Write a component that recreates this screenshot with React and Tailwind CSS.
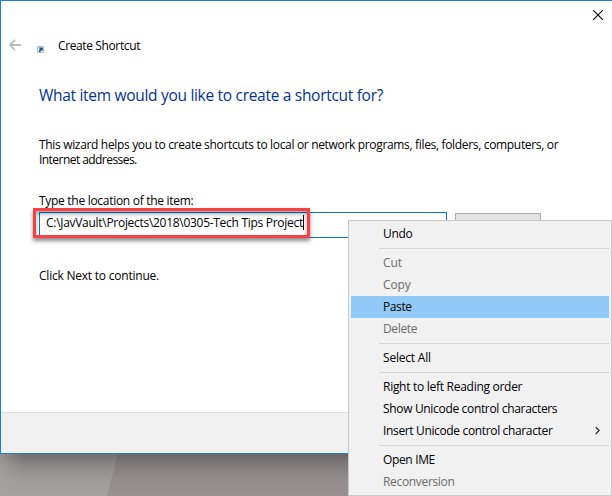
const menuGroups = [
  [{ label: "Undo", track: "tracking-[-0.3px]" }],
  [
    { label: "Cut", disabled: true, track: "tracking-[-0.1px]" },
    { label: "Copy", disabled: true, track: "tracking-[-0.1px]" },
    { label: "Paste", active: true, track: "tracking-[-0.4px]" },
    { label: "Delete", disabled: true, track: "tracking-[-0.35px]" },
  ],
  [{ label: "Select All", track: "tracking-[-0.2px]" }],
  [
    { label: "Right to left Reading order", track: "tracking-[-0.28px]" },
    { label: "Show Unicode control characters", track: "tracking-[-0.33px]" },
    { label: "Insert Unicode control character", submenu: true, track: "tracking-[-0.35px]" },
  ],
  [
    { label: "Open IME", track: "tracking-[-0.35px]" },
    { label: "Reconversion", disabled: true, track: "tracking-[-0.33px]" },
  ],
];

function MenuItem({ label, disabled, active, submenu, track }) {
  return (
    <div
      role="menuitem"
      className={`flex h-[22px] items-center justify-between pr-[9px] pb-px pl-8 ${active ? "bg-[#91c9f7]" : ""} ${disabled ? "text-[#6d6d6d]" : "text-black"}`}
    >
      <span className={track}>{label}</span>
      {submenu && (
        <svg width="5" height="9" viewBox="0 0 5 9" fill="none" stroke="#333" strokeWidth="1.3">
          <path d="M.7 1 4.1 4.5.7 8" />
        </svg>
      )}
    </div>
  );
}

function ContextMenu() {
  return (
    <div
      role="menu"
      className="absolute top-[220px] left-[348px] h-[276px] w-[264px] border border-[#c8c8c8] bg-[#f1f1f1] p-0.5"
    >
      {menuGroups.map((group, i) => (
        <div key={i}>
          {i > 0 && <div className="mt-[3px] mb-[3px] ml-7 h-px bg-[#d5d5d5]" />}
          {group.map((item) => (
            <MenuItem key={item.label} {...item} />
          ))}
        </div>
      ))}
    </div>
  );
}

function Desktop() {
  return (
    <div className="h-[42px] bg-[#989392]">
      <svg className="block" width="612" height="42">
        <defs>
          <linearGradient id="shade" x1="0" y1="0" x2="0" y2="1">
            <stop offset="0" stopColor="#3c3838" stopOpacity=".5" />
            <stop offset=".25" stopColor="#3c3838" stopOpacity=".27" />
            <stop offset=".6" stopColor="#3c3838" stopOpacity=".07" />
            <stop offset="1" stopColor="#3c3838" stopOpacity="0" />
          </linearGradient>
          <linearGradient id="corner" x1="0" y1="0" x2="1" y2="0">
            <stop offset="0" stopColor="#a6a2a1" stopOpacity=".7" />
            <stop offset="1" stopColor="#a6a2a1" stopOpacity="0" />
          </linearGradient>
        </defs>
        <path d="M0 0H118L107 42H0Z" fill="#a6a2a1" />
        <rect width="612" height="42" fill="url(#shade)" />
        <rect width="22" height="42" fill="url(#corner)" />
      </svg>
    </div>
  );
}

export default function App() {
  return (
    <div className="relative h-[496px] w-[612px] overflow-hidden bg-white font-['Open_Sans','Noto_Sans',sans-serif] text-[12px] leading-[15px] text-black">
      <div className="flex h-[454px] flex-col border-t border-b border-l border-[#1a80d5]">
        <div className="flex h-7 justify-end pt-[9px] pr-[9px]">
          <svg width="10" height="10" viewBox="0 0 10 10" stroke="#000" strokeWidth="1.1">
            <path d="M0 0 10 10M10 0 0 10" />
          </svg>
        </div>
        <div className="flex h-8 items-center pl-2">
          <svg width="12" height="12" viewBox="0 0 12 12" fill="none" stroke="#bdbdbd" strokeWidth="1.9">
            <path d="M12 6H1M6 .9.9 6 6 11.1" />
          </svg>
          <svg className="mt-[9px] ml-4" width="7" height="7" viewBox="0 0 7 7">
            <path d="M.5.5h6v6h-6z" fill="#eef1f4" stroke="#b3b9bf" />
            <path d="M2 6V4.3l.9-1L2 2V1.5h3.8V5l-1-.8L3.5 5.2V6z" fill="#1d5aa6" />
          </svg>
          <h1 className="mt-px ml-3.5 whitespace-nowrap tracking-[-0.38px]">Create Shortcut</h1>
        </div>
        <div className="flex-1 pl-[38px]">
          <h2 className="mt-[23px] whitespace-nowrap text-[15.5px] leading-[22px] tracking-[-0.3px] text-[#003399]">
            What item would you like to create a shortcut for?
          </h2>
          <p className="mt-[31px] whitespace-nowrap tracking-[-0.33px]">
            This wizard helps you to create shortcuts to local or network programs, files, folders, computers, or
            <br />
            <span className="tracking-[-0.55px]">Internet addresses.</span>
          </p>
          <label className="mt-[26px] block whitespace-nowrap tracking-[-0.29px]">Type the location of the item:</label>
          <div className="mt-1 flex gap-2">
            <div className="relative flex h-[26px] w-[408px] items-center border border-[#0078d7] pb-[5px] pl-1.5">
              <span className="whitespace-nowrap tracking-[-0.29px]">
                C:\JavVault\Projects\2018\0305-Tech Tips Project
              </span>
              <div className="absolute top-[2px] left-[263px] h-[15px] w-px bg-black" />
              <div className="absolute top-[-5px] left-[-7px] h-[30px] w-[277px] border-[3px] border-[#f94144] shadow-[0_3px_4px_rgba(0,0,0,0.45),inset_0_3px_4px_rgba(0,0,0,0.35)]" />
            </div>
            <button className="mt-px h-6 w-[86px] border border-[#adadad] bg-[#e1e1e1]" aria-label="Browse" />
          </div>
          <p className="mt-[30px] whitespace-nowrap tracking-[-0.22px]">Click Next to continue.</p>
        </div>
        <div className="h-[41px] border-t border-[#dfdfdf] bg-[#f0f0f0]" />
      </div>
      <Desktop />
      <ContextMenu />
    </div>
  );
}
